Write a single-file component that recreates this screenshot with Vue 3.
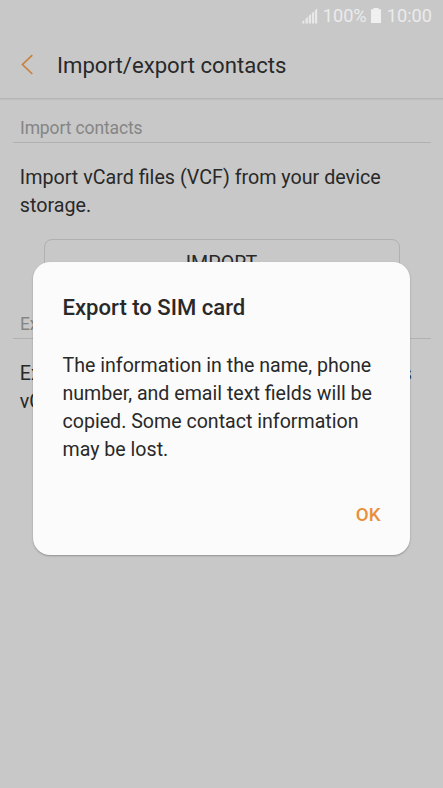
<script setup>
const dialogLines = [
  'The information in the name, phone',
  'number, and email text fields will be',
  'copied. Some contact information',
  'may be lost.',
]
</script>

<template>
  <div class="screen">
    <header class="status">
      <svg class="signal" width="16" height="16" viewBox="0 0 16 16">
        <path d="M0.3 15.5v-2l2-1.4v3.4zM3.5 15.5v-4.8l2.3-1.8v6.6zM6.7 15.5V8l2.3-2v9.5zM9.9 15.5V5.2l2.3-2v12.3zM13 15.5V2.3l2.2-1.7v14.9z" />
      </svg>
      <span class="percent">100%</span>
      <svg class="battery" width="10" height="15" viewBox="0 0 10 15">
        <path d="M2.5 0h5v1.2H10V15H0V1.2h2.5z" />
      </svg>
      <span class="clock">10:00</span>
    </header>

    <div class="title-bar">
      <svg class="back" width="13" height="22" viewBox="0 0 13 22">
        <path d="M11.3 1.2L1.5 10.5l9.8 9.5" />
      </svg>
      <h1>Import/export contacts</h1>
    </div>

    <main>
      <section>
        <h2>Import contacts</h2>
        <p>Import vCard files (VCF) from your device<br />storage.</p>
        <button class="import">IMPORT</button>
      </section>
      <section class="export">
        <h2>Export contacts</h2>
        <p><span class="fit">Export your contacts to device storage as</span>vCard files (VCF).</p>
      </section>
    </main>

    <div class="overlay">
      <div class="dialog" role="dialog">
        <h3>Export to SIM card</h3>
        <p class="message">
          <span v-for="line in dialogLines" :key="line">{{ line }}</span>
        </p>
        <div class="actions"><button>OK</button></div>
      </div>
    </div>
  </div>
</template>

<style>
body {
  background: #c8c8c8;
}
</style>

<style scoped>
.screen {
  position: relative;
  width: 443px;
  height: 788px;
  overflow: hidden;
  background: #c8c8c8;
  color: #292929;
  font-family: Roboto, "Liberation Sans", sans-serif;
  white-space: nowrap;
}
h1, h2, h3, p {
  margin: 0;
  font-weight: 400;
}
button {
  border: 0;
  padding: 0;
  background: none;
  color: inherit;
  font-family: inherit;
}
.status {
  display: flex;
  box-sizing: border-box;
  height: 32px;
  padding: 0 11px 1px 0;
  align-items: center;
  justify-content: flex-end;
  color: #ebebeb;
  font-size: 18.2px;
}
.status svg {
  fill: #f0f0f0;
}
.status .signal {
  margin-right: 5px;
  fill: #e8e8e8;
}
.battery {
  margin: 0 6px 0 4px;
}
.title-bar {
  display: flex;
  box-sizing: border-box;
  height: 67px;
  padding: 0 0 1px 21px;
  align-items: center;
  border-bottom: 1px solid #b5b5b5;
  box-shadow: 0 1px 1px #c0c0c0;
}
.back {
  margin-right: 23px;
  fill: none;
  stroke: #c8813c;
  stroke-width: 1.7;
}
h1 {
  font-size: 22.15px;
  line-height: 30px;
}
main {
  padding: 17px 12.5px 0 12.5px;
}
h2 {
  height: 26px;
  padding-left: 7.5px;
  border-bottom: 1px solid #b1b1b1;
  color: #858585;
  font-size: 17.5px;
  letter-spacing: -0.12px;
  line-height: 24px;
}
section p {
  padding: 21px 0 0 7.3px;
  font-size: 19.7px;
  line-height: 28.3px;
}
.import {
  display: block;
  box-sizing: border-box;
  width: 356px;
  height: 48px;
  margin: 18px 0 0 31px;
  padding-top: 2px;
  border: 1px solid #b0b0b0;
  border-radius: 8px;
  font-size: 19.7px;
}
.export {
  padding-top: 25px;
}
.fit {
  display: block;
  width: 392px;
  text-align-last: justify;
  white-space: normal;
}
.overlay {
  position: absolute;
  inset: 0;
  padding: 262px 33px 0;
}
.dialog {
  display: flex;
  box-sizing: border-box;
  width: 377px;
  height: 293px;
  padding: 30px 29px 0;
  flex-direction: column;
  border-radius: 17px;
  background: #fbfbfb;
  box-shadow: 0 1px 2px rgba(0, 0, 0, 0.28);
}
h3 {
  padding-left: 0.5px;
  font-size: 22.1px;
  font-weight: 500;
  line-height: 30px;
}
.message {
  display: flex;
  padding: 29.6px 0 0 0.5px;
  flex-direction: column;
  align-items: flex-start;
  font-size: 19.6px;
  line-height: 28.3px;
}
.actions {
  display: flex;
  padding: 36.4px 0.5px 0 0;
  justify-content: flex-end;
}
.actions button {
  color: #e88f3c;
  font-size: 18.7px;
  font-weight: 500;
  line-height: 28px;
}
</style>
